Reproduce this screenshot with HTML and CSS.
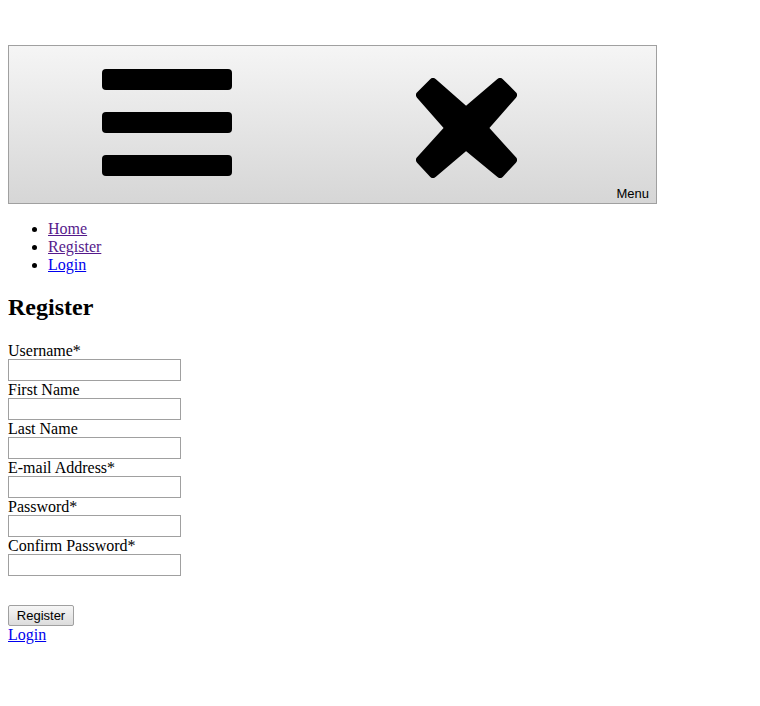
FILE: index.html
```html
<!DOCTYPE html>
<html lang="en">
<head>
  <meta charset="UTF-8">
  <title>Register</title>
  <link rel="stylesheet" href="styles.css">
</head>
<body>

  <!-- Menu toggle -->
  <div class="menu-box">
    <svg class="icon-burger" width="130" height="107" viewBox="0 0 130 107">
      <rect x="0" y="0" width="130" height="21" rx="4"/>
      <rect x="0" y="43" width="130" height="21" rx="4"/>
      <rect x="0" y="86" width="130" height="21" rx="4"/>
    </svg>
    <svg class="icon-close" width="101" height="100" viewBox="0 0 101 100">
      <polygon points="4,17 17,4 50,33 84,4 97,17 68,50 97,82 84,96 50,68 17,96 4,82 33,50"
               stroke="#000" stroke-width="8" stroke-linejoin="round"/>
    </svg>
    <span class="menu-label">Menu</span>
  </div>

  <ul class="nav">
    <li><a class="visited" href="#">Home</a></li>
    <li><a class="visited" href="#">Register</a></li>
    <li><a href="#">Login</a></li>
  </ul>

  <h2>Register</h2>

  <form class="register-form">
    <label for="username">Username*</label>
    <input type="text" id="username">
    <label for="first">First Name</label>
    <input type="text" id="first">
    <label for="last">Last Name</label>
    <input type="text" id="last">
    <label for="email">E-mail Address*</label>
    <input type="text" id="email">
    <label for="pw">Password*</label>
    <input type="password" id="pw">
    <label for="pw2">Confirm Password*</label>
    <input type="password" id="pw2">

    <button type="button">Register</button>
  </form>
  <a href="#">Login</a>

</body>
</html>
```

FILE: styles.css
```css
body {
  margin: 8px;
  font-family: "Liberation Serif", "Times New Roman", serif;
  font-size: 16px;
  line-height: 18px;
  color: #000;
}

a {
  color: #0000ee;
}

a.visited {
  color: #551a8b;
}

.menu-box {
  position: relative;
  margin-top: 37px;
  width: 647px;
  height: 157px;
  border: 1px solid #a0a0a0;
  background: linear-gradient(#f5f5f5, #d6d6d6);
  display: flex;
  align-items: flex-start;
}

.icon-burger {
  margin: 23px 0 0 93px;
}

.icon-close {
  margin: 32px 0 0 184px;
}

.menu-label {
  position: absolute;
  right: 7px;
  bottom: 2px;
  font-family: "Liberation Sans", Arial, sans-serif;
  font-size: 13px;
  line-height: 15px;
}

.nav {
  margin: 16px 0;
  padding-left: 40px;
}

h2 {
  font-size: 24px;
  line-height: 27px;
  margin: 20px 0 21px;
}

.register-form label {
  display: block;
  height: 17px;
}

.register-form input {
  display: block;
  box-sizing: border-box;
  width: 173px;
  height: 22px;
  margin: 0;
  border: 1px solid #a0a0a0;
  padding: 1px 2px;
}

.register-form button {
  display: block;
  margin-top: 29px;
  height: 21px;
  width: 66px;
  padding: 0;
  font-family: "Liberation Sans", Arial, sans-serif;
  font-size: 13px;
  border: 1px solid #a0a0a0;
  border-radius: 2px;
  background: linear-gradient(#f6f6f6, #dcdcdc);
}
```
